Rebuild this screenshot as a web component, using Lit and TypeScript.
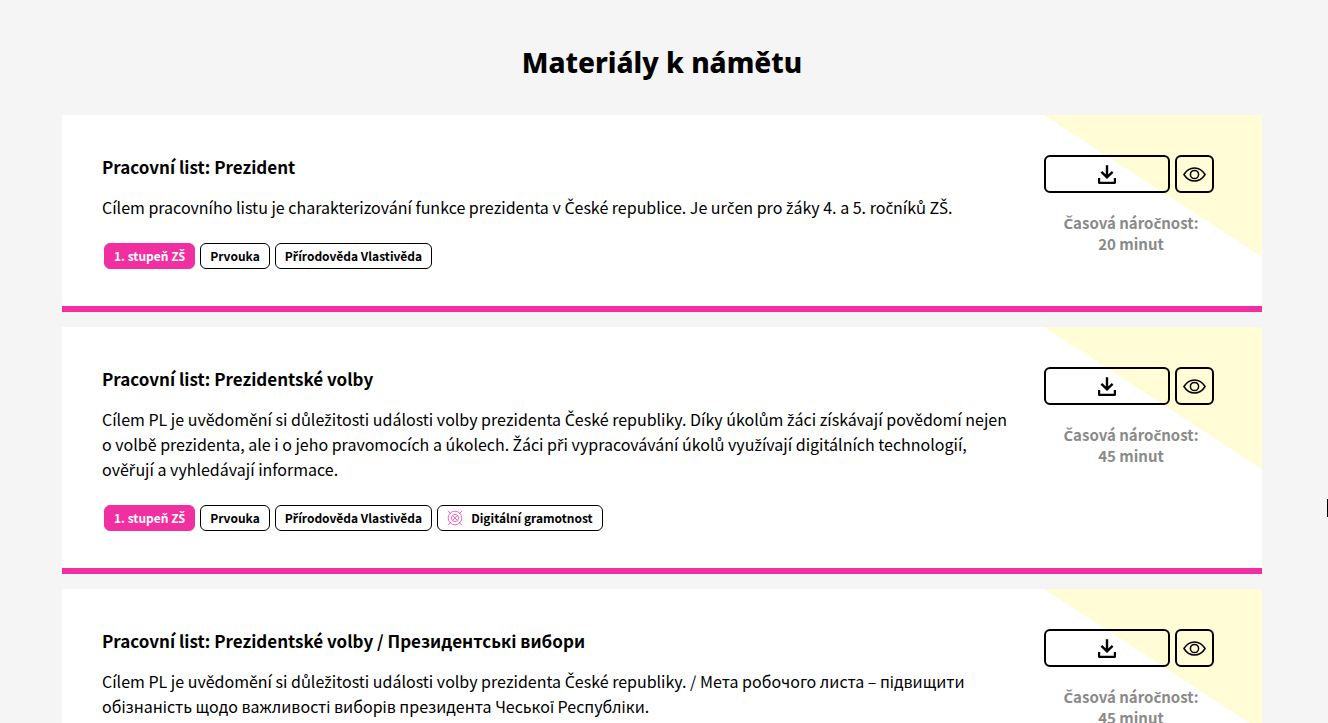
import { LitElement, html, css, svg, nothing } from "lit";
import { customElement, property } from "lit/decorators.js";

interface Material {
  title: string;
  text: string;
  minutes: number;
  level: string;
  subjects: string[];
  skill?: string;
}

const materials: Material[] = [
  {
    title: "Pracovní list: Prezident",
    text: "Cílem pracovního listu je charakterizování funkce prezidenta v České republice. Je určen pro žáky 4. a 5. ročníků ZŠ.",
    minutes: 20,
    level: "1. stupeň ZŠ",
    subjects: ["Prvouka", "Přírodověda Vlastivěda"],
  },
  {
    title: "Pracovní list: Prezidentské volby",
    text: "Cílem PL je uvědomění si důležitosti události volby prezidenta České republiky. Díky úkolům žáci získávají povědomí nejen o volbě prezidenta, ale i o jeho pravomocích a úkolech. Žáci při vypracovávání úkolů využívají digitálních technologií, ověřují a vyhledávají informace.",
    minutes: 45,
    level: "1. stupeň ZŠ",
    subjects: ["Prvouka", "Přírodověda Vlastivěda"],
    skill: "Digitální gramotnost",
  },
  {
    title: "Pracovní list: Prezidentské volby / Президентські вибори",
    text: "Cílem PL je uvědomění si důležitosti události volby prezidenta České republiky. / Мета робочого листа – підвищити обізнаність щодо важливості виборів президента Чеської Республіки.",
    minutes: 45,
    level: "",
    subjects: [],
  },
];

const downloadIcon = svg`<svg width="18" height="19" viewBox="0 0 18 19" fill="none" stroke="currentColor" aria-hidden="true">
  <path d="M9 0.2V12M3.4 6.9L9 12.4L14.6 6.9" stroke-width="2.4"/>
  <path d="M1.1 13V17.8H16.9V13" stroke-width="2.2" stroke-linejoin="round"/>
</svg>`;

const eyeIcon = svg`<svg width="23" height="15" viewBox="0 0 23 15" fill="none" stroke="currentColor" stroke-width="1.5" aria-hidden="true">
  <path d="M0.9 7.5C3.6 3.2 7.2 0.9 11.5 0.9S19.4 3.2 22.1 7.5C19.4 11.8 15.8 14.1 11.5 14.1S3.6 11.8 0.9 7.5Z" stroke-linejoin="round"/>
  <circle cx="11.5" cy="7.5" r="4.1"/>
</svg>`;

const skillIcon = svg`<svg width="16" height="16" viewBox="0 0 16 16" fill="none" stroke="currentColor" stroke-width="0.7" aria-hidden="true">
  <circle cx="8" cy="8" r="6.8"/>
  <circle cx="8" cy="8" r="3.6"/>
  <path d="M0.8 0.8L4 4M12 12L15.2 15.2M15.2 0.8L12 4M4 12L0.8 15.2M5.8 5.8L10.2 10.2M10.2 5.8L5.8 10.2"/>
</svg>`;

// The CJK face has no precomposed glyph for these letters; they are set in a companion face.
const czech = (text: string) =>
  text
    .split(/([čřžšČŘŽŠ])/)
    .map((part, i) => (i % 2 ? html`<span class="caron">${part}</span>` : part));

@customElement("material-card")
export class MaterialCard extends LitElement {
  @property({ attribute: false }) item!: Material;

  static styles = css`
    :host {
      display: block;
    }
    .card {
      display: flex;
      padding: 40px 44px 37px 40px;
      border-bottom: 6px solid #f22fa1;
      background: linear-gradient(to bottom left, #fffcd6 50%, transparent 50%) right top / 218px 142px no-repeat #fff;
    }
    .caron {
      font-family: "Noto Sans", sans-serif;
      line-height: 1;
    }
    .body {
      flex: 1;
      min-width: 0;
      padding-right: 28px;
    }
    .title {
      margin: 0 0 16px;
      font-size: 17px;
      line-height: 24px;
      font-weight: 700;
    }
    .text {
      margin: 0 0 23px;
      font-size: 16px;
      line-height: 25px;
    }
    .tags {
      display: flex;
      flex-wrap: wrap;
      gap: 5px;
      margin: 0;
      padding: 0 0 0 2px;
      list-style: none;
    }
    .tag {
      display: flex;
      align-items: center;
      gap: 8px;
      box-sizing: border-box;
      height: 26px;
      padding: 0 9px;
      border: 1px solid #000;
      border-radius: 6px;
      background: #fff;
      font-size: 12px;
      line-height: 24px;
      font-weight: 700;
    }
    .level {
      border-color: #f22fa1;
      background: #f22fa1;
      color: #fff;
    }
    .tag svg {
      color: #f22fa1;
    }
    .side {
      flex: none;
      width: 174px;
    }
    .actions {
      display: flex;
      gap: 5px;
      margin-bottom: 19px;
    }
    .btn {
      display: flex;
      align-items: center;
      justify-content: center;
      box-sizing: border-box;
      height: 38px;
      padding: 0;
      border: 2px solid #000;
      border-radius: 6px;
      background: none;
      color: #000;
      cursor: pointer;
    }
    .download {
      width: 126px;
    }
    .preview {
      width: 39px;
    }
    .time {
      margin: 0;
      color: #8a8a8a;
      font-size: 15px;
      line-height: 21px;
      font-weight: 700;
      text-align: center;
    }
  `;

  render() {
    const m = this.item;
    return html`
      <article class="card">
        <div class="body">
          <h3 class="title">${m.title}</h3>
          <p class="text">${czech(m.text)}</p>
          ${m.level
            ? html`<ul class="tags">
                <li class="tag level"><span>${czech(m.level)}</span></li>
                ${m.subjects.map((s) => html`<li class="tag"><span>${czech(s)}</span></li>`)}
                ${m.skill ? html`<li class="tag">${skillIcon}<span>${czech(m.skill)}</span></li>` : nothing}
              </ul>`
            : nothing}
        </div>
        <div class="side">
          <div class="actions">
            <button class="btn download" type="button" aria-label="Stáhnout">${downloadIcon}</button>
            <button class="btn preview" type="button" aria-label="Zobrazit">${eyeIcon}</button>
          </div>
          <p class="time">${czech("Časová náročnost:")}<br />${m.minutes} minut</p>
        </div>
      </article>
    `;
  }
}

@customElement("app-root")
export class AppRoot extends LitElement {
  static styles = css`
    :host {
      display: block;
      position: relative;
      box-sizing: border-box;
      height: 100vh;
      overflow-y: auto;
      scrollbar-width: none;
      padding: 0 66px 0 62px;
      background: #f5f5f5;
      color: #000;
      font-family: "Noto Sans CJK SC", "Noto Sans", sans-serif;
    }
    .section {
      max-width: 1200px;
      margin: 0 auto;
    }
    .heading {
      margin: 0;
      padding: 42px 0 33px;
      font-family: "Noto Sans", sans-serif;
      font-size: 28px;
      line-height: 40px;
      font-weight: 800;
      text-align: center;
    }
    .list {
      display: grid;
      gap: 15px;
    }
    .edge {
      position: absolute;
      top: 499px;
      right: 0;
      width: 1px;
      height: 18px;
      background: #000;
    }
  `;

  render() {
    return html`
      <section class="section">
        <h2 class="heading">Materiály k námětu</h2>
        <div class="list">${materials.map((m) => html`<material-card .item=${m}></material-card>`)}</div>
      </section>
      <div class="edge"></div>
    `;
  }
}
